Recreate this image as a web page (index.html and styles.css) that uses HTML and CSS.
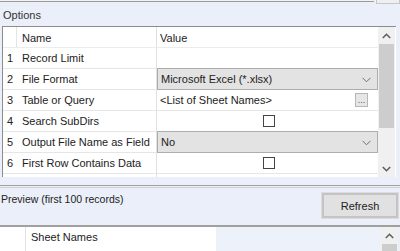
FILE: index.html
```html
<!DOCTYPE html>
<html>
<head>
<meta charset="utf-8">
<link rel="stylesheet" href="styles.css">
</head>
<body>
<div class="topbar"><div class="topline"></div><div class="topbox"></div></div>
<div class="section-label">Options</div>
<div class="grid">
  <div class="table">
    <div class="row head">
      <div class="rh"></div>
      <div class="name">Name</div>
      <div class="value">Value</div>
    </div>
    <div class="row">
      <div class="rh">1</div>
      <div class="name">Record Limit</div>
      <div class="value"></div>
    </div>
    <div class="row">
      <div class="rh">2</div>
      <div class="name">File Format</div>
      <div class="value combo"><span>Microsoft Excel (*.xlsx)</span>
        <svg class="chev" width="9" height="6" viewBox="0 0 9 6"><path d="M0.5 0.8 L4.5 4.8 L8.5 0.8" fill="none" stroke="#707070" stroke-width="1"/></svg>
      </div>
    </div>
    <div class="row">
      <div class="rh">3</div>
      <div class="name">Table or Query</div>
      <div class="value text"><span>&lt;List of Sheet Names&gt;</span><div class="dots">...</div></div>
    </div>
    <div class="row">
      <div class="rh">4</div>
      <div class="name">Search SubDirs</div>
      <div class="value center"><div class="check"></div></div>
    </div>
    <div class="row">
      <div class="rh">5</div>
      <div class="name">Output File Name as Field</div>
      <div class="value combo"><span>No</span>
        <svg class="chev" width="9" height="6" viewBox="0 0 9 6"><path d="M0.5 0.8 L4.5 4.8 L8.5 0.8" fill="none" stroke="#707070" stroke-width="1"/></svg>
      </div>
    </div>
    <div class="row">
      <div class="rh">6</div>
      <div class="name">First Row Contains Data</div>
      <div class="value center"><div class="check"></div></div>
    </div>
    <div class="row">
      <div class="rh"></div>
      <div class="name"></div>
      <div class="value"></div>
    </div>
  </div>
  <div class="vscroll">
    <div class="arrow"><svg width="9" height="6" viewBox="0 0 9 6"><path d="M0.8 5 L4.5 1.3 L8.2 5" fill="none" stroke="#606060" stroke-width="1.6"/></svg></div>
    <div class="track"><div class="thumb"></div></div>
    <div class="arrow"><svg width="9" height="6" viewBox="0 0 9 6"><path d="M0.8 1 L4.5 4.7 L8.2 1" fill="none" stroke="#606060" stroke-width="1.6"/></svg></div>
  </div>
</div>
<div class="splitter"></div>
<div class="preview-bar">
  <div class="preview-label">Preview (first 100 records)</div>
  <button class="btn">Refresh</button>
</div>
<div class="pgrid">
  <div class="prh"></div>
  <div class="pcol">Sheet Names</div>
  <div class="pempty"></div>
  <div class="pscroll">
    <div class="arrow"><svg width="9" height="6" viewBox="0 0 9 6"><path d="M0.8 5 L4.5 1.3 L8.2 5" fill="none" stroke="#606060" stroke-width="1.6"/></svg></div>
    <div class="pthumb"></div>
  </div>
</div>
</body>
</html>
```

FILE: styles.css
```css
html, body {
  margin: 0;
  padding: 0;
}
body {
  width: 400px;
  height: 251px;
  overflow: hidden;
  background: #eaeff9;
  font-family: "Liberation Sans", Arial, sans-serif;
  font-size: 11px;
  color: #222;
}
.topbar {
  display: flex;
  height: 4px;
}
.topline {
  flex: 1;
  height: 1px;
  background: #f2f2f2;
  border-bottom: 1px solid #9a9a9a;
}
.topbox {
  width: 22px;
  height: 3px;
  margin-left: 2px;
  background: #efefef;
  border: 1px solid #c6c6c6;
  border-top: none;
}
.section-label {
  height: 22px;
  line-height: 22px;
  padding-left: 3px;
  color: #333;
}
.grid {
  display: flex;
  margin-left: 2px;
  width: 393px;
  height: 150px;
  border-top: 1px solid #8c8c8c;
  border-left: 1px solid #8c8c8c;
  background: #fff;
  overflow: hidden;
}
.table {
  width: 375px;
  display: flex;
  flex-direction: column;
}
.row {
  display: flex;
  height: 20px;
  border-bottom: 1px solid #e6e6e6;
  flex: none;
}
.row.head {
  height: 20px;
  border-bottom: 1px solid #ececec;
}
.rh {
  width: 14px;
  line-height: 21px;
  padding-left: 4px;
  box-sizing: border-box;
}
.head .rh {
  border-right: 1px solid #e4e4e4;
}
.name {
  width: 140px;
  line-height: 21px;
  padding-left: 5px;
  box-sizing: border-box;
  border-right: 1px solid #e0e0e0;
}
.head .name, .head .value {
  line-height: 22px;
}
.value {
  flex: 1;
  line-height: 21px;
  padding-left: 3px;
  box-sizing: border-box;
  position: relative;
}
.value.combo {
  display: flex;
  align-items: center;
  justify-content: space-between;
  background: #e3e3e3;
  border: 1px solid #adadad;
  margin-top: -1px;
  height: 22px;
  padding-right: 6px;
  padding-top: 1px;
}
.value.text {
  display: flex;
  align-items: center;
  justify-content: space-between;
  padding-right: 10px;
}
.dots {
  width: 11px;
  height: 12px;
  background: #e6e6e6;
  border: 1px solid #b6b6b6;
  font-size: 9px;
  line-height: 12px;
  text-align: center;
  color: #555;
}
.value.center {
  display: flex;
  align-items: center;
  justify-content: center;
}
.check {
  width: 10px;
  height: 10px;
  border: 1px solid #444;
  background: #fff;
}
.vscroll {
  width: 17px;
  background: #f0f0f0;
  display: flex;
  flex-direction: column;
}
.arrow {
  height: 17px;
  display: flex;
  align-items: center;
  justify-content: center;
  flex: none;
}
.track {
  flex: 1;
  padding: 0 1px;
}
.thumb {
  height: 84px;
  background: #cdcdcd;
}
.splitter {
  margin-top: 8px;
  height: 1px;
  border-top: 1px solid #a0a0a0;
  border-bottom: 1px solid #d0d0d0;
}
.preview-bar {
  display: flex;
  justify-content: space-between;
  height: 37px;
}
.preview-label {
  padding-left: 1px;
  padding-top: 4px;
  line-height: 14px;
  font-size: 10.5px;
}
.btn {
  margin-top: 5px;
  margin-right: 2px;
  width: 76px;
  height: 25px;
  background: #e1e1e1;
  border: 2px solid #c4c4c4;
  outline: 1px solid #dcdcdc;
  font-family: "Liberation Sans", Arial, sans-serif;
  font-size: 11px;
  color: #222;
  padding: 0;
}
.pgrid {
  display: flex;
  height: 24px;
  border-top: 2px solid #a0a0a0;
}
.prh {
  width: 25px;
  background: #fff;
  border-right: 1px solid #e2e2e2;
}
.pcol {
  width: 185px;
  background: #fff;
  padding-left: 5px;
  line-height: 20px;
}
.pempty {
  flex: 1;
  background: #edf1fa;
}
.pscroll {
  width: 17px;
  margin-right: 2px;
  background: #f0f0f0;
}
.pthumb {
  margin: 0 1px;
  height: 8px;
  background: #cdcdcd;
}
```
